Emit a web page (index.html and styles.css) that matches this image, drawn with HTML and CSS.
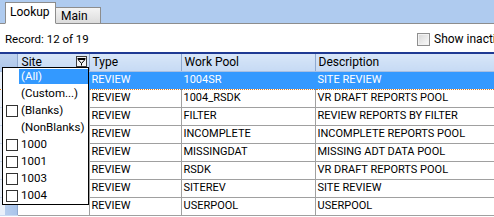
FILE: index.html
```html
<!DOCTYPE html>
<html>
<head>
<meta charset="utf-8">
<link rel="stylesheet" href="styles.css">
</head>
<body>
<div class="app">
  <div class="tabs">
    <div class="tab active">Lookup</div>
    <div class="tab">Main</div>
  </div>
  <div class="panel">
    <div class="toolbar">
      <span class="record">Record: 12 of 19</span>
      <label class="inactive"><span class="cb"></span><span class="inlbl">Show inactive</span></label>
    </div>
    <div class="grid">
      <table>
        <colgroup>
          <col class="c-ind"><col class="c-site"><col class="c-type"><col class="c-pool"><col class="c-desc">
        </colgroup>
        <thead>
          <tr>
            <th class="ind"></th>
            <th class="site"><span>Site</span>
              <span class="fbtn"><svg width="9" height="8" viewBox="0 0 9 8"><path d="M0.5 0.5H8.5M1 1.5L4.5 5.5L8 1.5Z M4.5 5.5V7.5" fill="none" stroke="#000" stroke-width="1"/></svg></span>
            </th>
            <th>Type</th>
            <th>Work Pool</th>
            <th>Description</th>
          </tr>
        </thead>
        <tbody>
          <tr class="sel"><td class="ind"></td><td></td><td>REVIEW</td><td>1004SR</td><td>SITE REVIEW</td></tr>
          <tr><td class="ind"></td><td></td><td>REVIEW</td><td>1004_RSDK</td><td>VR DRAFT REPORTS POOL</td></tr>
          <tr><td class="ind"></td><td></td><td>REVIEW</td><td>FILTER</td><td>REVIEW REPORTS BY FILTER</td></tr>
          <tr><td class="ind"></td><td></td><td>REVIEW</td><td>INCOMPLETE</td><td>INCOMPLETE REPORTS POOL</td></tr>
          <tr><td class="ind"></td><td></td><td>REVIEW</td><td>MISSINGDAT</td><td>MISSING ADT DATA POOL</td></tr>
          <tr><td class="ind"></td><td></td><td>REVIEW</td><td>RSDK</td><td>VR DRAFT REPORTS POOL</td></tr>
          <tr><td class="ind"></td><td></td><td>REVIEW</td><td>SITEREV</td><td>SITE REVIEW</td></tr>
          <tr><td class="ind"></td><td></td><td>REVIEW</td><td>USERPOOL</td><td>USERPOOL</td></tr>
        </tbody>
      </table>
      <ul class="dropdown">
        <li class="hl"><span class="nocb"></span><span class="lbl">(All)</span></li>
        <li><span class="nocb"></span><span class="lbl">(Custom...)</span></li>
        <li><span class="box"></span><span class="lbl">(Blanks)</span></li>
        <li><span class="nocb"></span><span class="lbl">(NonBlanks)</span></li>
        <li><span class="box"></span><span class="lbl">1000</span></li>
        <li><span class="box"></span><span class="lbl">1001</span></li>
        <li><span class="box"></span><span class="lbl">1003</span></li>
        <li><span class="box"></span><span class="lbl">1004</span></li>
      </ul>
    </div>
  </div>
</div>
</body>
</html>
```

FILE: styles.css
```css
* { box-sizing: border-box; }
html, body { margin: 0; padding: 0; }
body {
  width: 494px;
  height: 217px;
  overflow: hidden;
  background: #afcbef;
  font-family: Roboto, "Liberation Sans", sans-serif;
  font-size: 11px;
  color: #000;
}
.app { display: flex; flex-direction: column; height: 217px; }
.tabs {
  height: 24px;
  display: flex;
  align-items: flex-end;
  padding-left: 5px;
  border-bottom: 1px solid #8d8d8d;
}
.tab {
  height: 17px;
  width: 45px;
  padding: 0 0 0 5px;
  margin-bottom: -1px;
  border: 1px solid #8d8d8d;
  border-left: none;
  background: linear-gradient(#f4f4f4, #dcdcdc);
  font-size: 12px;
  line-height: 16px;
}
.tab.active {
  height: 22px;
  width: 51px;
  padding: 0 0 0 4px;
  border-left: 1px solid #8d8d8d;
  background: #fff;
  border-bottom: 1px solid #fff;
  line-height: 19px;
}
.panel { flex: 1; background: #fff; display: flex; flex-direction: column; }
.toolbar {
  height: 28px;
  display: flex;
  align-items: center;
  padding: 0 0 0 5px;
  white-space: nowrap;
}
.record { font-size: 11.5px; margin-top: 2px; }
.inactive {
  margin-left: auto;
  flex: none;
  width: 77px;
  display: flex;
  align-items: center;
  gap: 4px;
  margin-top: 2px;
  font-size: 12px;
}
.inlbl { flex: none; }
.cb {
  flex: none;
  width: 13px; height: 13px;
  border: 1px solid #8f8f8f;
  background: linear-gradient(135deg, #d6d6d6, #fbfbfb);
  box-shadow: inset 0 0 0 1px #f2f2f2;
}
.grid {
  position: relative;
  flex: 1;
  border-top: 2px solid #1f3a93;
  overflow: hidden;
}
table { border-collapse: collapse; table-layout: fixed; width: 560px; }
.c-ind { width: 17px; }
.c-site { width: 72px; }
.c-type { width: 92px; }
.c-pool { width: 134px; }
.c-desc { width: 245px; }
th {
  height: 17px;
  padding: 0 0 0 3px;
  text-align: left;
  font-weight: normal;
  font-size: 12px;
  background: linear-gradient(#d8e6f8, #c6daf4);
  border-left: 1px solid #ffffff;
  border-right: 1px solid #8fa9cf;
  border-bottom: 1px solid #a7bfe2;
  white-space: nowrap;
  overflow: hidden;
}
th.ind { background: linear-gradient(#bfd3ef, #adc6ea); border-left: none; }
th.site { position: relative; padding-left: 4px; }
.fbtn {
  position: absolute;
  right: 2px; top: 2px;
  width: 11px; height: 11px;
  border: 1px solid #3c3c3c;
  background: #f4f4f4;
  display: flex; align-items: center; justify-content: center;
}
.fbtn svg { display: block; }
td {
  height: 18px;
  padding: 0 0 0 2px;
  border-bottom: 1px solid #a0a0a0;
  border-right: 1px solid #a0a0a0;
  white-space: nowrap;
  overflow: hidden;
  line-height: 16px;
}
td.ind {
  background: linear-gradient(90deg, #e9f0fa 0 5px, #b5cdee 5px, #a9c4ea);
  border-right: 1px solid #8fa9cf;
  border-bottom: 1px solid #c8d8ef;
}
tr.sel td { background: #3399ff; color: #fff; border-top: 1px dotted #e07b1a; border-bottom: 1px dotted #e07b1a; border-right-color: #3399ff; }
tr.sel td.ind { background: linear-gradient(90deg, #e9f0fa 0 5px, #b5cdee 5px, #a9c4ea); border-right-color: #8fa9cf; }
.dropdown {
  position: absolute;
  left: 2px;
  top: 13px;
  width: 87px;
  margin: 0;
  padding: 0;
  list-style: none;
  background: #fff;
  border: 1px solid #000;
  font-size: 11.5px;
}
.dropdown li {
  height: 17px;
  display: flex;
  align-items: center;
}
.dropdown .nocb, .dropdown .box {
  width: 12px; height: 12px;
  margin: 0 1px 0 3px;
  flex: none;
}
.dropdown .box { border: 1px solid #333; background: #fff; }
.dropdown .lbl { flex: 1; height: 15px; line-height: 15px; padding-left: 2px; }
.dropdown li.hl .lbl { background: #3399ff; color: #fff; }
```
